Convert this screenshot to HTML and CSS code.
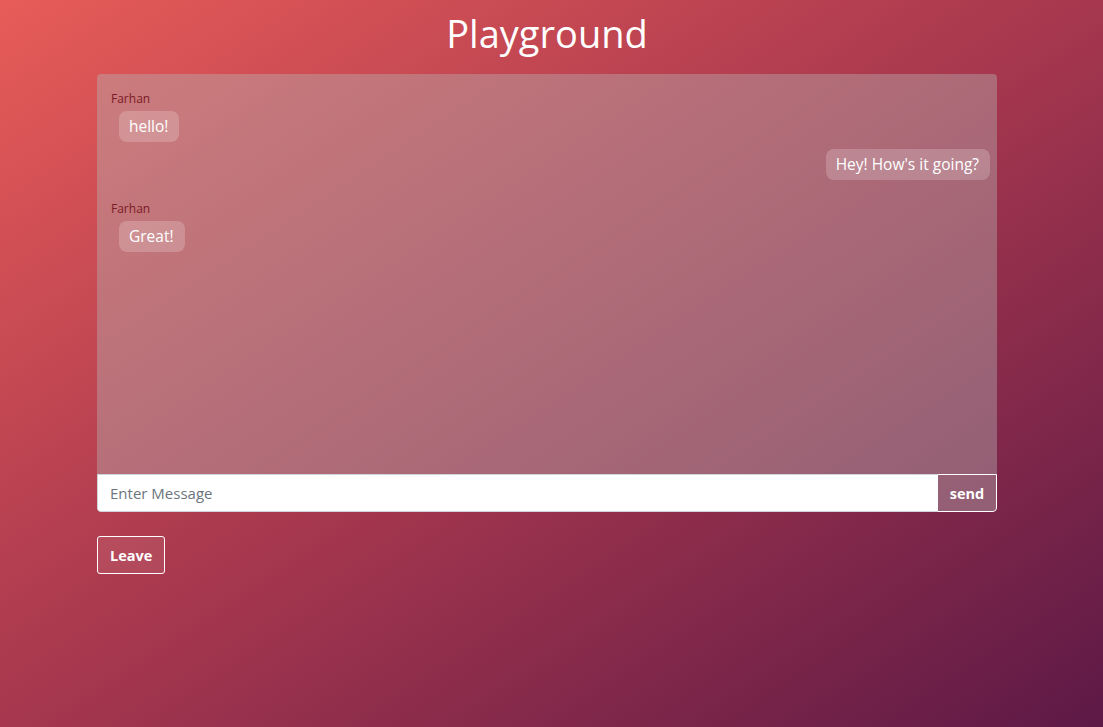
FILE: index.html
```html
<!DOCTYPE html>
<html>
<head>
<meta charset="utf-8">
<link rel="stylesheet" href="styles.css">
</head>
<body>
<div class="page">
  <h1 class="title">Playground</h1>
  <div class="chat">
    <div class="messages">
      <div class="msg left">
        <div class="name">Farhan</div>
        <div class="bubble">hello!</div>
      </div>
      <div class="msg right">
        <div class="bubble">Hey! How's it going?</div>
      </div>
      <div class="msg left">
        <div class="name">Farhan</div>
        <div class="bubble">Great!</div>
      </div>
    </div>
    <div class="composer">
      <input class="input" type="text" placeholder="Enter Message">
      <button class="send">send</button>
    </div>
  </div>
  <button class="leave">Leave</button>
</div>
</body>
</html>
```
FILE: styles.css
```css
html, body {
  margin: 0;
  padding: 0;
  height: 100%;
}
body {
  font-family: "Open Sans", "Noto Sans", sans-serif;
  background: linear-gradient(to bottom right, #e75c58 0%, #a6374e 50%, #5d1946 100%);
  color: #fff;
  min-height: 727px;
}
.page {
  width: 900px;
  margin: 0 0 0 97px;
  padding-top: 6px;
}
.title {
  margin: 0 0 14px;
  text-align: center;
  font-weight: 400;
  font-size: 38px;
  line-height: 54px;
}
.chat {
  border-radius: 4px;
  overflow: hidden;
}
.messages {
  height: 400px;
  box-sizing: border-box;
  background: rgba(182, 182, 182, 0.4);
  padding: 16px 7px 0 14px;
  display: flex;
  flex-direction: column;
}
.msg {
  display: flex;
  flex-direction: column;
  margin-bottom: 7px;
}
.msg.left { align-items: flex-start; }
.msg.right { align-items: flex-end; margin-bottom: 20px; }
.name {
  font-size: 12px;
  line-height: 18px;
  color: #7a1b26;
  margin-bottom: 3px;
}
.bubble {
  background: rgba(255, 255, 255, 0.2);
  border-radius: 8px;
  font-size: 15.5px;
  line-height: 21px;
  padding: 5px 11px 5px 10px;
}
.msg.left .bubble { margin-left: 8px; }
.composer {
  display: flex;
  height: 38px;
}
.input {
  flex: 1;
  border: 1px solid #ced4da;
  border-right: none;
  border-radius: 0 0 0 4px;
  padding: 0 12px;
  font-family: inherit;
  font-size: 15px;
  color: #495057;
  outline: none;
  background: #fff;
}
.input::placeholder { color: #6c757d; }
.send {
  width: 60px;
  border: 1px solid #fff;
  border-radius: 0 0 4px 0;
  background: rgba(182, 182, 182, 0.4);
  color: #fff;
  font-family: inherit;
  font-weight: 700;
  font-size: 14.5px;
  padding: 0;
}
.leave {
  margin-top: 24px;
  height: 38px;
  padding: 0 12px;
  border: 1px solid #fff;
  border-radius: 3px;
  background: rgba(255, 255, 255, 0.08);
  color: #fff;
  font-family: inherit;
  font-weight: 700;
  font-size: 14.5px;
}
```
